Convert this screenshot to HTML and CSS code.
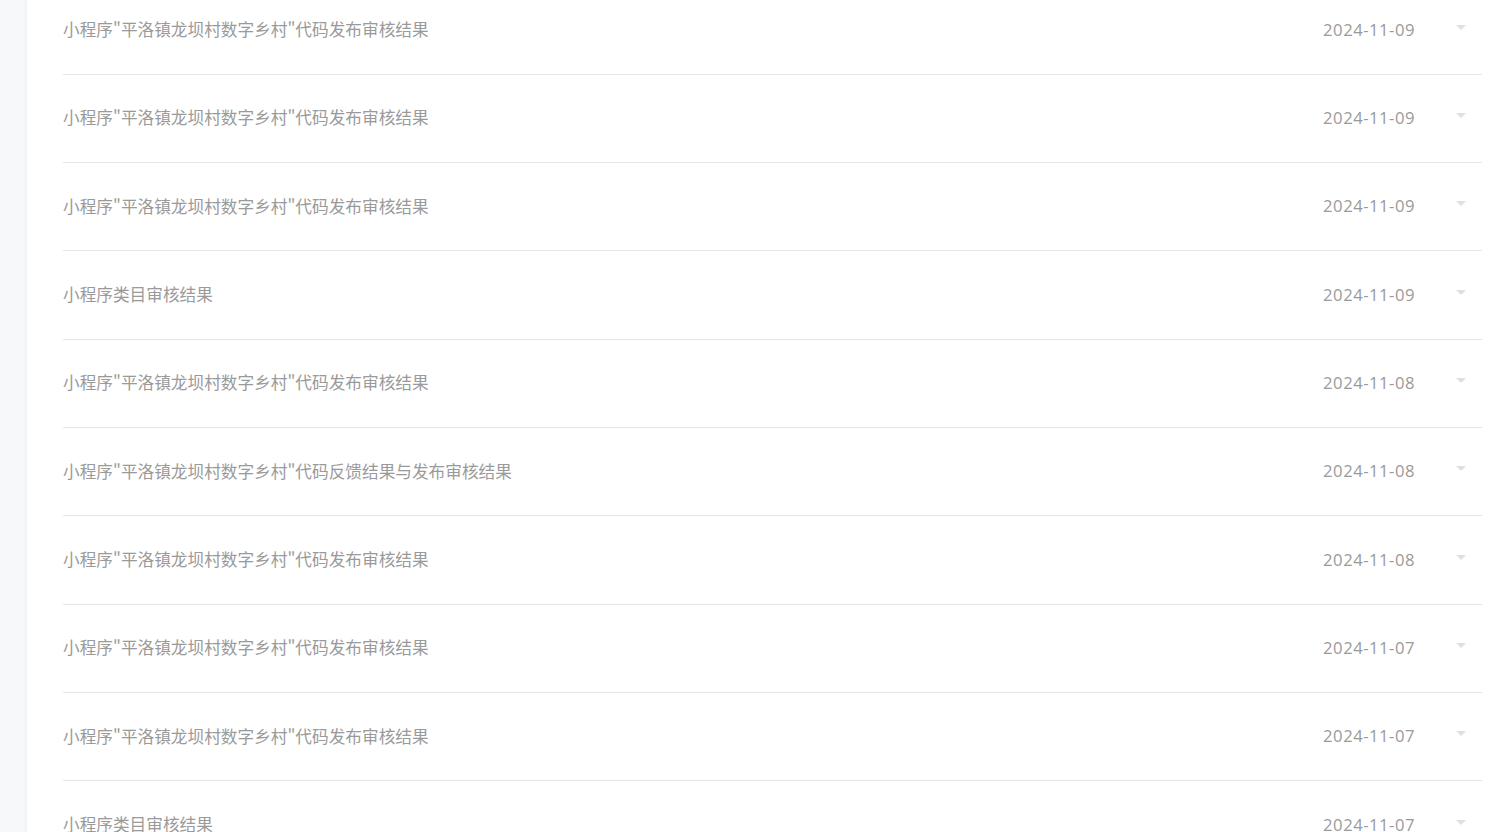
FILE: index.html
```html
<!DOCTYPE html>
<html lang="zh-CN">
<head>
<meta charset="utf-8">
<title>消息列表</title>
<link rel="stylesheet" href="styles.css">
</head>
<body>
<div class="page">
  <aside class="sidebar"></aside>
  <main class="main">
    <ul class="list">
      <li class="row"><span class="title">小程序"平洛镇龙坝村数字乡村"代码发布审核结果</span><span class="date">2024-11-09</span><span class="caret"></span></li>
      <li class="row"><span class="title">小程序"平洛镇龙坝村数字乡村"代码发布审核结果</span><span class="date">2024-11-09</span><span class="caret"></span></li>
      <li class="row"><span class="title">小程序"平洛镇龙坝村数字乡村"代码发布审核结果</span><span class="date">2024-11-09</span><span class="caret"></span></li>
      <li class="row"><span class="title">小程序类目审核结果</span><span class="date">2024-11-09</span><span class="caret"></span></li>
      <li class="row"><span class="title">小程序"平洛镇龙坝村数字乡村"代码发布审核结果</span><span class="date">2024-11-08</span><span class="caret"></span></li>
      <li class="row"><span class="title">小程序"平洛镇龙坝村数字乡村"代码反馈结果与发布审核结果</span><span class="date">2024-11-08</span><span class="caret"></span></li>
      <li class="row"><span class="title">小程序"平洛镇龙坝村数字乡村"代码发布审核结果</span><span class="date">2024-11-08</span><span class="caret"></span></li>
      <li class="row"><span class="title">小程序"平洛镇龙坝村数字乡村"代码发布审核结果</span><span class="date">2024-11-07</span><span class="caret"></span></li>
      <li class="row"><span class="title">小程序"平洛镇龙坝村数字乡村"代码发布审核结果</span><span class="date">2024-11-07</span><span class="caret"></span></li>
      <li class="row"><span class="title">小程序类目审核结果</span><span class="date">2024-11-07</span><span class="caret"></span></li>
    </ul>
  </main>
</div>
</body>
</html>
```
FILE: styles.css
```css
html, body {
  margin: 0;
  padding: 0;
  height: 100%;
  overflow: hidden;
  background: #ffffff;
  font-family: "Noto Sans CJK SC", "Noto Sans", sans-serif;
}
.page {
  display: flex;
  height: 100%;
}
.sidebar {
  width: 26px;
  flex: none;
  background: #f7f8fa;
  box-shadow: 1px 0 2px rgba(0, 0, 0, 0.05);
  border-right: 1px solid #eef0f3;
  box-sizing: border-box;
}
.main {
  flex: 1;
  padding: 0 17px 0 37px;
  overflow: hidden;
}
.list {
  list-style: none;
  margin: -13.6px 0 0;
  padding: 0;
}
.row {
  display: flex;
  align-items: center;
  height: 88.33px;
  box-sizing: border-box;
  border-bottom: 1px solid #e6e6e6;
  padding-right: 16px;
  padding-bottom: 2px;
  color: #9a9a9a;
  font-size: 16.67px;
}
.title {
  flex: 1;
  white-space: nowrap;
}
.date {
  margin-right: 41px;
  font-family: "Open Sans", "Noto Sans", sans-serif;
  letter-spacing: 0.5px;
}
.caret {
  width: 0;
  height: 0;
  border-left: 5px solid transparent;
  border-right: 5px solid transparent;
  border-top: 5px solid #dcdfe6;
  margin-top: -4px;
}
```
